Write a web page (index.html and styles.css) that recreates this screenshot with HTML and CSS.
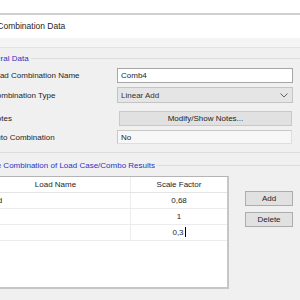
FILE: index.html
```html
<!doctype html>
<html>
<head>
<meta charset="UTF-8">
<link rel="stylesheet" href="styles.css">
</head>
<body>
<div class="win">
	<div class="chrome"></div>
	<div class="title">Load Combination Data</div>
	<div class="band"></div>

	<div class="group g1">
		<div class="legend"><span class="lead"></span><span class="cap">General Data</span><span class="rule"></span></div>
		<div class="row r-name"><span class="lbl">Load Combination Name</span><div class="field edit">Comb4</div></div>
		<div class="row r-type"><span class="lbl">Combination Type</span><div class="field combo">Linear Add<svg class="chev" width="8" height="5" viewBox="0 0 8 5"><path d="M0.5 0.5 L4 4 L7.5 0.5" fill="none" stroke="#606060" stroke-width="1"/></svg></div></div>
		<div class="row r-notes"><span class="lbl">Notes</span><div class="field btn">Modify/Show Notes...</div></div>
		<div class="row r-auto"><span class="lbl">Auto Combination</span><div class="field ro">No</div></div>
	</div>

	<div class="group g2">
		<div class="legend"><span class="lead"></span><span class="cap">Define Combination of Load Case/Combo Results</span><span class="rule"></span></div>
		<div class="area">
			<div class="grid">
				<div class="tr head"><div class="c1">Load Name</div><div class="c2">Scale Factor</div></div>
				<div class="tr"><div class="c1 left">Dead</div><div class="c2">0,68</div></div>
				<div class="tr"><div class="c1 left"></div><div class="c2">1</div></div>
				<div class="tr"><div class="c1 left"></div><div class="c2">0,3<span class="caret"></span></div></div>
			</div>
			<div class="side">
				<div class="sbtn">Add</div>
				<div class="sbtn">Delete</div>
			</div>
		</div>
	</div>
</div>
</body>
</html>
```

FILE: styles.css
```css
html, body { margin:0; padding:0; }
body { width:300px; height:300px; overflow:hidden; background:#f0f0f0; font-family:"Liberation Sans", Arial, sans-serif; font-size:8px; color:#1e1e1e; }

.win { margin-left:-30px; width:340px; }
.chrome { height:13px; background:#fff; border-bottom:2px solid #d0d0d0; }
.title { height:23px; background:#fff; font-size:8.5px; line-height:23px; padding-left:6px; }
.band { height:9px; background:#f4f4f4; border-bottom:1px solid #e2e2e2; }

.legend { display:flex; align-items:center; height:12px; }
.legend .lead { width:4px; border-top:1px solid #dcdcdc; }
.legend .cap { color:#2b33c6; padding:0 2px; white-space:nowrap; }
.legend .rule { flex:1; border-top:1px solid #dcdcdc; }

.g1 { margin-top:4px; padding-bottom:8px; border-bottom:1px solid #dcdcdc; }
.g1 .legend { margin-left:5px; }
.row { display:flex; align-items:center; padding-left:21px; }
.lbl { flex:1; white-space:nowrap; }
.field { width:176px; box-sizing:border-box; margin-right:17px; padding-left:3px; display:flex; align-items:center; }
.r-name { margin-top:4px; }
.r-type { margin-top:4px; }
.r-notes { margin-top:8px; }
.r-auto { margin-top:4px; }
.edit { height:15px; background:#fff; border:1px solid #a6a6a6; }
.combo { height:16px; background:#e5e5e5; border:1px solid #c4c4c4; color:#333; }
.combo .chev { margin-left:auto; margin-right:4px; }
.btn { height:15px; background:#e1e1e1; border:1px solid #c8c8c8; justify-content:center; padding-left:0; width:173px; margin-right:18px; margin-left:2px; }
.ro { height:14px; background:#f7f7f7; border:1px solid #dedede; border-left-color:#c8c8c8; border-top-color:#c8c8c8; width:175px; margin-right:18px; margin-left:1px; }

.g2 { margin-top:6px; }
.g2 .legend { margin-left:2px; }
.area { display:flex; margin-top:5px; }
.grid { margin-left:10px; width:249px; height:113px; box-sizing:border-box; background:#fff; border:1px solid #b4b4b4; border-right:2px solid #c6c6c6; border-bottom:2px solid #c6c6c6; }
.tr { display:flex; height:15px; border-bottom:1px solid #ececec; }
.tr .c1 { width:149px; border-right:1px solid #ececec; text-align:center; line-height:15px; }
.tr .c1.left { text-align:left; padding-left:2px; width:147px; }
.tr .c2 { flex:1; text-align:center; line-height:15px; }
.head { border-bottom:1px solid #e4e4e4; }
.caret { display:inline-block; width:0; height:10px; border-left:1px solid #000; vertical-align:-2px; margin-left:1px; }

.side { display:flex; flex-direction:column; gap:6px; margin-left:16px; padding-top:15px; }
.sbtn { width:48px; height:15px; box-sizing:border-box; background:#e1e1e1; border:1px solid #adadad; text-align:center; line-height:13px; }
```
